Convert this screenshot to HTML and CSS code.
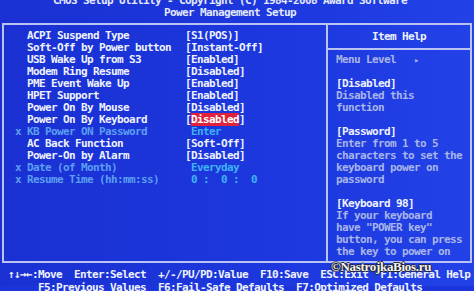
FILE: index.html
```html
<!DOCTYPE html>
<html>
<head>
<meta charset="utf-8">
<link rel="stylesheet" href="styles.css">
</head>
<body>
<div class="screen">
  <div class="header">
    <div class="line">CMOS Setup Utility - Copyright (C) 1984-2008 Award Software</div>
    <div class="line">Power Management Setup</div>
  </div>
  <div class="main">
    <div class="items">
      <div class="row"><span class="mk"></span><span class="name">ACPI Suspend Type</span><span class="val">[S1(POS)]</span></div>
      <div class="row"><span class="mk"></span><span class="name">Soft-Off by Power button</span><span class="val">[Instant-Off]</span></div>
      <div class="row"><span class="mk"></span><span class="name">USB Wake Up from S3</span><span class="val">[Enabled]</span></div>
      <div class="row"><span class="mk"></span><span class="name">Modem Ring Resume</span><span class="val">[Disabled]</span></div>
      <div class="row"><span class="mk"></span><span class="name">PME Event Wake Up</span><span class="val">[Enabled]</span></div>
      <div class="row"><span class="mk"></span><span class="name">HPET Support</span><span class="val">[Enabled]</span></div>
      <div class="row"><span class="mk"></span><span class="name">Power On By Mouse</span><span class="val">[Disabled]</span></div>
      <div class="row"><span class="mk"></span><span class="name">Power On By Keyboard</span><span class="val">[<span class="sel">Disabled</span>]</span></div>
      <div class="row off"><span class="mk">x</span><span class="name">KB Power ON Password</span><span class="val"> Enter</span></div>
      <div class="row"><span class="mk"></span><span class="name">AC Back Function</span><span class="val">[Soft-Off]</span></div>
      <div class="row"><span class="mk"></span><span class="name">Power-On by Alarm</span><span class="val">[Disabled]</span></div>
      <div class="row off"><span class="mk">x</span><span class="name">Date (of Month)</span><span class="val"> Everyday</span></div>
      <div class="row off"><span class="mk">x</span><span class="name">Resume Time (hh:mm:ss)</span><span class="val"> 0 :  0 :  0</span></div>
    </div>
    <div class="help">
      <div class="help-title">Item Help</div>
      <div class="help-body">
        <div class="h">Menu Level   <span class="tri">&#9656;</span></div>
        <div class="h">&nbsp;</div>
        <div class="h hd">[Disabled]</div>
        <div class="h">Disabled this</div>
        <div class="h">function</div>
        <div class="h">&nbsp;</div>
        <div class="h hd">[Password]</div>
        <div class="h">Enter from 1 to 5</div>
        <div class="h">characters to set the</div>
        <div class="h">keyboard power on</div>
        <div class="h">password</div>
        <div class="h">&nbsp;</div>
        <div class="h hd">[Keyboard 98]</div>
        <div class="h">If your keyboard</div>
        <div class="h">have "POWER key"</div>
        <div class="h">button, you can press</div>
        <div class="h">the key to power on</div>
      </div>
    </div>
  </div>
  <div class="footer">
    <div class="fl">↑↓→←:Move  Enter:Select  +/-/PU/PD:Value  F10:Save  ESC:Exit  F1:General Help</div>
    <div class="fl">     F5:Previous Values  F6:Fail-Safe Defaults  F7:Optimized Defaults</div>
  </div>
  <div class="watermark">©NastrojkaBios.ru</div>
</div>
</body>
</html>
```
FILE: styles.css
```css
html, body {
  margin: 0;
  padding: 0;
}
body {
  width: 474px;
  height: 291px;
  overflow: hidden;
  background: #1b35da;
  font-family: "DejaVu Sans Mono", "Liberation Mono", monospace;
  font-weight: bold;
  font-size: 11px;
  letter-spacing: -0.62px;
  color: #eef2ff;
}
.screen {
  position: relative;
  width: 474px;
  height: 291px;
  background: linear-gradient(90deg, #1a30d2 0%, #1c38de 60%, #2242e8 100%);
}
.header {
  margin-top: -5px;
  padding-right: 14px;
  text-align: center;
  color: #e4e9fc;
}
.line {
  height: 12px;
  line-height: 12px;
  white-space: pre;
}
.main {
  margin: 4px 0 0 2px;
  width: 470px;
  height: 240px;
  box-sizing: border-box;
  border: 2px solid #b9c3f4;
  display: grid;
  grid-template-columns: 322px 1fr;
}
.items {
  padding: 5px 0 0 11px;
}
.row {
  display: grid;
  grid-template-columns: 12px 158px auto;
  height: 12px;
  line-height: 12px;
  white-space: pre;
  color: #eef2ff;
}
.row.off .mk,
.row.off .name {
  color: #5c9ef2;
}
.row.off .val {
  color: #3fb2f6;
}
.sel {
  background: #e0223a;
  color: #ffffff;
}
.help {
  border-left: 2px solid #b9c3f4;
  display: flex;
  flex-direction: column;
}
.help-title {
  height: 23px;
  line-height: 23px;
  text-align: center;
  border-bottom: 2px solid #b9c3f4;
  color: #eef2ff;
}
.help-body {
  padding: 4px 0 0 8px;
}
.h {
  height: 12px;
  line-height: 12px;
  white-space: pre;
  color: #a9b5ea;
}
.h.hd {
  color: #eef2ff;
}
.tri {
  font-size: 9px;
}
.footer {
  padding: 5px 0 0 8px;
  color: #eef2ff;
}
.fl {
  height: 13px;
  line-height: 13px;
  white-space: pre;
}
.watermark {
  position: absolute;
  left: 331px;
  top: 265px;
  font-family: "Liberation Serif", serif;
  font-weight: bold;
  font-size: 13px;
  line-height: 14px;
  color: #f4f4f4;
  text-shadow: -1px 0 #222, 1px 0 #222, 0 -1px #222, 0 1px #222;
  letter-spacing: -0.3px;
}
```
